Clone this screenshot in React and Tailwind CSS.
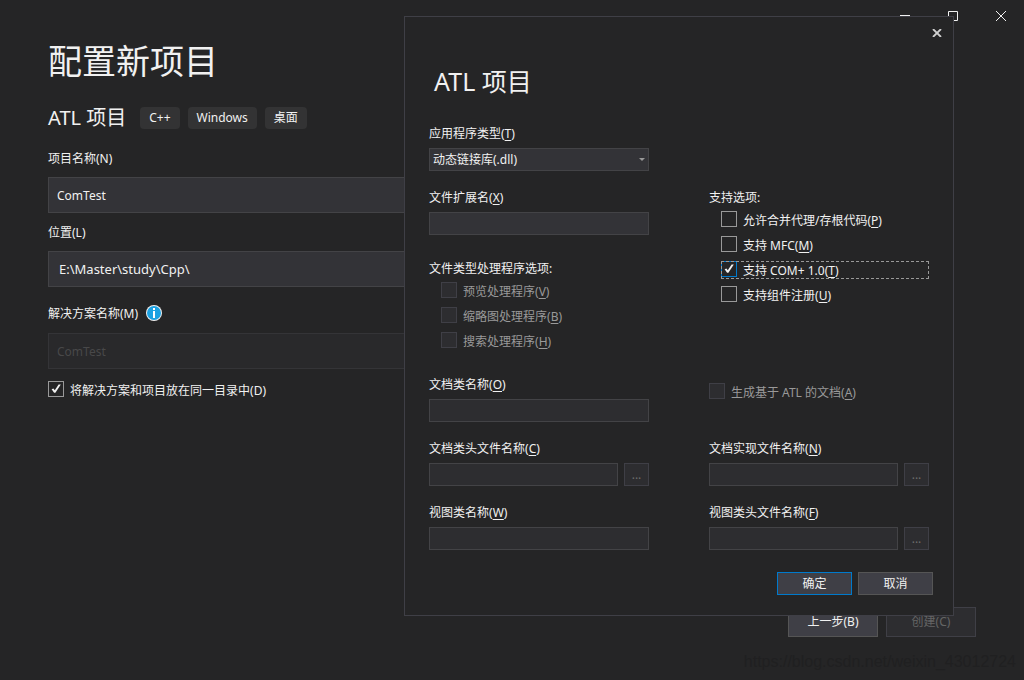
import { useState } from "react";

function CheckMark() {
  return (
    <svg
      viewBox="0 0 16 16"
      aria-hidden="true"
      className="pointer-events-none invisible col-start-1 row-start-1 size-4 text-[#f1f1f1] peer-checked:visible"
    >
      <path d="M3.6 8.2 5.4 7.4 6.8 9.3 10.6 3.6H12.8L7.4 11.8H6.1Z" fill="currentColor" />
    </svg>
  );
}

function Check({ id, label, hotkey, disabled, defaultChecked, focused }) {
  const box = disabled
    ? "border-[#3f3f46] bg-[#2d2d30]"
    : focused
      ? "border-[#007acc] bg-[#252526]"
      : "border-[#999999] bg-[#252526]";
  return (
    <div
      className={
        "flex h-[18px] items-start gap-1.5 " +
        (focused ? "outline-1 -outline-offset-1 outline-dashed outline-[#999999]" : "")
      }
    >
      <span className="grid size-4 shrink-0">
        <input
          id={id}
          type="checkbox"
          disabled={disabled}
          defaultChecked={defaultChecked}
          className={"peer col-start-1 row-start-1 size-4 appearance-none border outline-none " + box}
        />
        <CheckMark />
      </span>
      <label htmlFor={id} className={"leading-5 " + (disabled ? "text-[#999999]" : "text-[#f1f1f1]")}>
        {label}({hotkey})
      </label>
    </div>
  );
}

function Key({ children }) {
  return <span className="underline underline-offset-2">{children}</span>;
}

function Field({ id, label, hotkey, disabled, browse }) {
  return (
    <div className="flex flex-col gap-[5px]">
      <label htmlFor={id} className="leading-[18px]">
        {label}(<Key>{hotkey}</Key>)
      </label>
      <div className="flex gap-1.5">
        <input
          id={id}
          type="text"
          disabled={disabled}
          className={
            "h-[23px] min-w-0 flex-1 border border-[#434346] px-1 outline-none " +
            (disabled ? "bg-[#2d2d30]" : "bg-[#333337]")
          }
        />
        {browse && (
          <button
            type="button"
            disabled
            aria-label="浏览"
            className="h-[23px] w-[25px] border border-[#3f3f46] bg-[#2d2d30] text-[#6d6d6d]"
          >
            ...
          </button>
        )}
      </div>
    </div>
  );
}

function AtlDialog({ onClose }) {
  return (
    <section
      role="dialog"
      aria-labelledby="dialog-title"
      className="absolute top-4 right-[70px] flex w-[550px] flex-col border border-[#3f3f46] bg-[#252526] pb-5"
    >
      <div className="flex h-8 items-center justify-end px-[9px]">
        <button type="button" aria-label="关闭" onClick={onClose} className="p-0.5 text-[#d0d0d0]">
          <svg viewBox="0 0 10 8" className="h-2 w-2.5" fill="none" stroke="currentColor" strokeWidth="1.8">
            <path d="M1 0 9 8M9 0 1 8" />
          </svg>
        </button>
      </div>
      <h2 id="dialog-title" className="mt-4 px-[29px] text-[25px] leading-8">
        ATL 项目
      </h2>
      <div className="mt-7 grid grid-cols-2 gap-x-15 gap-y-[18px] px-6">
        <div className="flex flex-col gap-[5px]">
          <label htmlFor="app-type" className="leading-[18px]">
            应用程序类型(<Key>T</Key>)
          </label>
          <div className="grid">
            <select
              id="app-type"
              className="col-start-1 row-start-1 h-[23px] appearance-none border border-[#434346] bg-[#333337] px-[3px] outline-none"
            >
              <option>动态链接库(.dll)</option>
            </select>
            <svg
              viewBox="0 0 6 3"
              aria-hidden="true"
              className="pointer-events-none col-start-1 row-start-1 mr-1 h-[3px] w-1.5 self-center justify-self-end text-[#999999]"
            >
              <path d="M0 0H6L3 3Z" fill="currentColor" />
            </svg>
          </div>
        </div>
        <div />
        <Field id="file-ext" label="文件扩展名" hotkey="X" />
        <fieldset className="row-span-2">
          <legend className="leading-[18px]">支持选项:</legend>
          <div className="mt-1 flex flex-col gap-[7px] pl-3">
            <Check id="merge-proxy" label="允许合并代理/存根代码" hotkey={<Key>P</Key>} />
            <Check id="mfc" label="支持 MFC" hotkey={<Key>M</Key>} />
            <Check id="com-plus" label="支持 COM+ 1.0" hotkey={<Key>T</Key>} defaultChecked focused />
            <Check id="component-reg" label="支持组件注册" hotkey={<Key>U</Key>} />
          </div>
        </fieldset>
        <fieldset className="mt-[7px] mb-2">
          <legend className="leading-[18px]">文件类型处理程序选项:</legend>
          <div className="mt-1 flex flex-col gap-[7px] pl-3">
            <Check id="preview" label="预览处理程序" hotkey={<Key>V</Key>} disabled />
            <Check id="thumbnail" label="缩略图处理程序" hotkey={<Key>B</Key>} disabled />
            <Check id="search" label="搜索处理程序" hotkey={<Key>H</Key>} disabled />
          </div>
        </fieldset>
        <Field id="doc-class" label="文档类名称" hotkey="O" disabled />
        <div className="pt-[7px]">
          <Check id="atl-doc" label="生成基于 ATL 的文档" hotkey={<Key>A</Key>} disabled />
        </div>
        <Field id="doc-header" label="文档类头文件名称" hotkey="C" disabled browse />
        <Field id="doc-impl" label="文档实现文件名称" hotkey="N" disabled browse />
        <Field id="view-class" label="视图类名称" hotkey="W" disabled />
        <Field id="view-header" label="视图类头文件名称" hotkey="F" disabled browse />
      </div>
      <div className="mt-[22px] flex justify-end gap-1.5 px-5">
        <button
          type="button"
          onClick={onClose}
          className="h-[23px] w-[75px] border border-[#007acc] bg-[#3f3f46]"
        >
          确定
        </button>
        <button
          type="button"
          onClick={onClose}
          className="h-[23px] w-[75px] border border-[#555555] bg-[#3f3f46]"
        >
          取消
        </button>
      </div>
    </section>
  );
}

function WindowButton({ label, children }) {
  return (
    <button type="button" aria-label={label} className="flex h-8 w-[46px] items-center justify-center text-[#f1f1f1]">
      <svg viewBox="0 0 10 10" className="size-2.5 overflow-visible" fill="none" stroke="currentColor">
        {children}
      </svg>
    </button>
  );
}

export default function App() {
  const [open, setOpen] = useState(true);
  const input = "mt-2.5 h-9 w-full border outline-none ";
  return (
    <div className="relative flex min-h-screen flex-col bg-[#252526] font-['Noto_Sans','Noto_Sans_CJK_SC',sans-serif] text-xs text-[#f1f1f1]">
      <header className="flex h-8 justify-end gap-0.5">
        <WindowButton label="最小化">
          <path d="M0 4.5H10" />
        </WindowButton>
        <WindowButton label="最大化">
          <path d="M.5 .5H9.5V9.5H.5Z" />
        </WindowButton>
        <WindowButton label="关闭窗口">
          <path d="M0 0 10 10M10 0 0 10" />
        </WindowButton>
      </header>
      <main className="flex flex-1 flex-col px-12 pt-[5px]">
        <h1 className="text-[34px] leading-12">配置新项目</h1>
        <div className="mt-[19px] flex h-7 items-center gap-3.5">
          <h2 className="text-xl leading-7">ATL 项目</h2>
          <ul className="flex gap-2">
            <li className="rounded-sm bg-[#333334] px-[9px] leading-[22px]">C++</li>
            <li className="rounded-sm bg-[#333334] px-[9px] leading-[22px]">Windows</li>
            <li className="rounded-sm bg-[#333334] px-[9px] leading-[22px]">桌面</li>
          </ul>
        </div>
        <form className="mt-[19px] mr-12 flex flex-col" onSubmit={(e) => e.preventDefault()}>
          <label htmlFor="project-name" className="leading-4">
            项目名称(N)
          </label>
          <input id="project-name" defaultValue="ComTest" className={input + "border-[#434346] bg-[#333337] px-2"} />
          <label htmlFor="location" className="mt-3 leading-4">
            位置(L)
          </label>
          <input
            id="location"
            defaultValue="E:\Master\study\Cpp\"
            className={input + "border-[#434346] bg-[#333337] px-2.5 text-[13px]"}
          />
          <div className="mt-[18px] flex h-[18px] items-start gap-2">
            <label htmlFor="solution-name" className="leading-[18px]">
              解决方案名称(M)
            </label>
            <svg viewBox="0 0 16 16" className="size-4" role="img" aria-label="信息">
              <circle cx="8" cy="8" r="8" fill="#f1f1f1" />
              <circle cx="8" cy="8" r="7" fill="#1ba1e2" />
              <path d="M7 3H9V5H7ZM7 6H9V13H7Z" fill="#fff" />
            </svg>
          </div>
          <input
            id="solution-name"
            disabled
            defaultValue="ComTest"
            className={input + "border-[#343437] bg-[#29292b] px-2 text-[#484849]"}
          />
          <div className="mt-3">
            <Check id="same-dir" label="将解决方案和项目放在同一目录中" hotkey="D" defaultChecked />
          </div>
        </form>
        <footer className="mt-auto mb-[43px] flex justify-end gap-2">
          <button type="button" className="h-[30px] w-[90px] border border-[#555555] bg-[#3f3f46]">
            上一步(B)
          </button>
          <button
            type="button"
            disabled
            className="h-[30px] w-[90px] border border-[#3f3f46] bg-[#2d2d30] text-[#656565]"
          >
            创建(C)
          </button>
        </footer>
      </main>
      <p className="absolute right-2 bottom-1.5 font-['Liberation_Sans',sans-serif] text-base leading-6 text-[#202021]">
        https://blog.csdn.net/weixin_43012724
      </p>
      {open && <AtlDialog onClose={() => setOpen(false)} />}
    </div>
  );
}
